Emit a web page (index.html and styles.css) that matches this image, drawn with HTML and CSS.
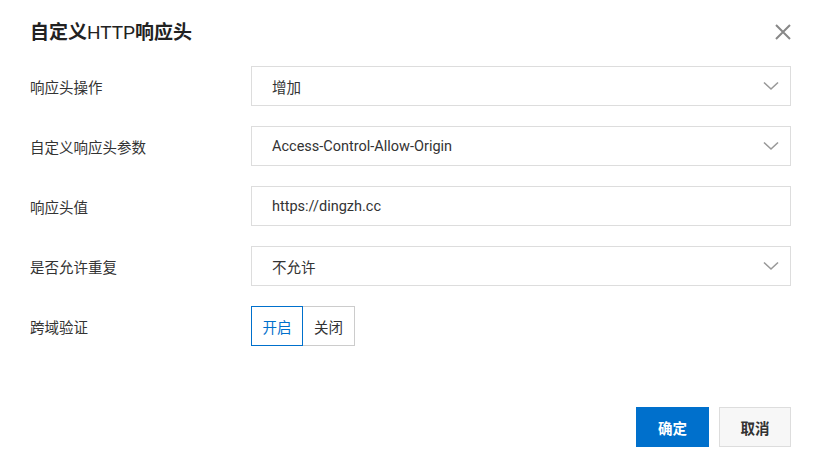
FILE: index.html
```html
<!DOCTYPE html>
<html lang="zh-CN">
<head>
<meta charset="utf-8">
<title>自定义HTTP响应头</title>
<link rel="stylesheet" href="styles.css">
</head>
<body>
<div class="dialog">
  <div class="header">
    <h1 class="title">自定义<span class="latin">HTTP</span>响应头</h1>
    <button class="close" aria-label="关闭">
      <svg width="18" height="18" viewBox="0 0 18 18"><path d="M2 2L16 16M16 2L2 16" stroke="#888" stroke-width="2" fill="none"/></svg>
    </button>
  </div>
  <div class="form">
    <div class="row">
      <div class="label">响应头操作</div>
      <div class="field select"><span>增加</span><svg class="chev" width="16" height="10" viewBox="0 0 16 10"><path d="M1 1.5L8 8L15 1.5" stroke="#999" stroke-width="1.6" fill="none"/></svg></div>
    </div>
    <div class="row">
      <div class="label">自定义响应头参数</div>
      <div class="field select"><span>Access-Control-Allow-Origin</span><svg class="chev" width="16" height="10" viewBox="0 0 16 10"><path d="M1 1.5L8 8L15 1.5" stroke="#999" stroke-width="1.6" fill="none"/></svg></div>
    </div>
    <div class="row">
      <div class="label">响应头值</div>
      <div class="field"><span>https://dingzh.cc</span></div>
    </div>
    <div class="row">
      <div class="label">是否允许重复</div>
      <div class="field select"><span>不允许</span><svg class="chev" width="16" height="10" viewBox="0 0 16 10"><path d="M1 1.5L8 8L15 1.5" stroke="#999" stroke-width="1.6" fill="none"/></svg></div>
    </div>
    <div class="row">
      <div class="label">跨域验证</div>
      <div class="toggle">
        <div class="opt active">开启</div>
        <div class="opt">关闭</div>
      </div>
    </div>
  </div>
  <div class="footer">
    <button class="btn primary">确定</button>
    <button class="btn">取消</button>
  </div>
</div>
</body>
</html>
```
FILE: styles.css
```css
* { box-sizing: border-box; }
html, body { margin: 0; padding: 0; background: #fff; }
body {
  font-family: Roboto, "Noto Sans CJK SC", sans-serif;
  color: #333;
  font-size: 14.5px;
}
.dialog {
  width: 817px;
  height: 458px;
  padding: 0 26px 0 30px;
}
.header {
  height: 66px;
  display: flex;
  align-items: center;
  justify-content: space-between;
}
.title {
  margin: 0;
  font-size: 19px;
  font-weight: 700;
  color: #222;
  line-height: 1;
  padding-bottom: 2px;
}
.title .latin { font-weight: 400; }
.close {
  border: 0;
  background: none;
  padding: 0;
  margin-right: -2px;
  width: 20px;
  height: 20px;
  display: flex;
  align-items: center;
  justify-content: center;
  margin-top: -2px;
}
.form {
  display: flex;
  flex-direction: column;
  gap: 20px;
}
.row {
  display: flex;
  align-items: center;
  height: 40px;
}
.label {
  width: 221px;
  flex: none;
  color: #333;
}
.field {
  flex: 1;
  height: 40px;
  border: 1px solid #ddd;
  display: flex;
  align-items: center;
  justify-content: space-between;
  padding: 0 11px 0 20px;
  color: #333;
}
.chev { display: block; }
.toggle {
  display: flex;
  height: 40px;
}
.opt {
  width: 52px;
  height: 40px;
  display: flex;
  align-items: center;
  justify-content: center;
  border: 1px solid #ccc;
  color: #333;
}
.opt + .opt { border-left: 0; }
.opt.active {
  border-color: #0070cc;
  color: #0070cc;
}
.footer {
  display: flex;
  justify-content: flex-end;
  gap: 10px;
  margin-top: 61px;
}
.btn {
  width: 72px;
  height: 40px;
  font-family: inherit;
  font-size: 14.5px;
  font-weight: 700;
  border: 1px solid #ddd;
  background: #f7f7f7;
  color: #333;
  padding: 0;
}
.btn.primary {
  width: 73px;
  background: #0070cc;
  border-color: #0070cc;
  color: #fff;
}
```
